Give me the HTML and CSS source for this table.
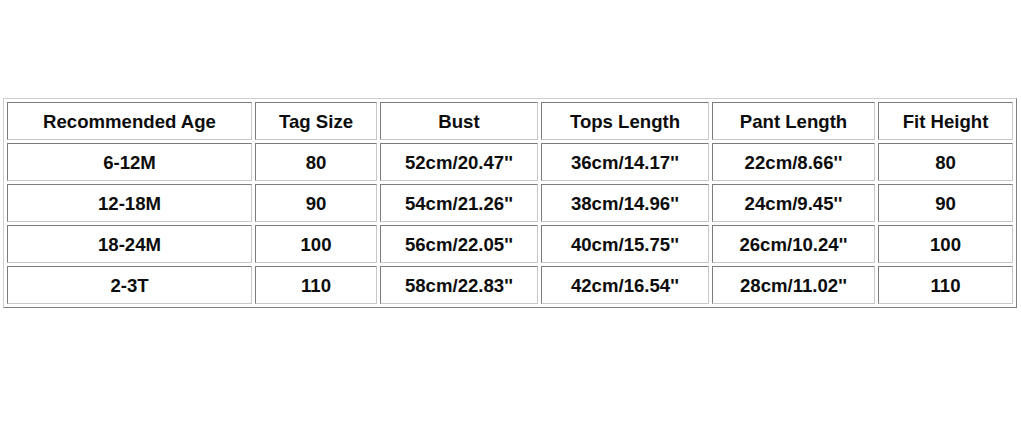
FILE: index.html
```html
<!DOCTYPE html>
<html>
<head>
<meta charset="utf-8">
<link rel="stylesheet" href="styles.css">
</head>
<body>
<div class="page">
<table class="size-table">
  <colgroup>
    <col class="c1"><col class="c2"><col class="c3"><col class="c4"><col class="c5"><col class="c6">
  </colgroup>
  <tr><td>Recommended Age</td><td>Tag Size</td><td>Bust</td><td>Tops Length</td><td>Pant Length</td><td>Fit Height</td></tr>
  <tr><td>6-12M</td><td>80</td><td>52cm/20.47''</td><td>36cm/14.17''</td><td>22cm/8.66''</td><td>80</td></tr>
  <tr><td>12-18M</td><td>90</td><td>54cm/21.26''</td><td>38cm/14.96''</td><td>24cm/9.45''</td><td>90</td></tr>
  <tr><td>18-24M</td><td>100</td><td>56cm/22.05''</td><td>40cm/15.75''</td><td>26cm/10.24''</td><td>100</td></tr>
  <tr><td>2-3T</td><td>110</td><td>58cm/22.83''</td><td>42cm/16.54''</td><td>28cm/11.02''</td><td>110</td></tr>
</table>
</div>
</body>
</html>
```
FILE: styles.css
```css
html, body {
  margin: 0;
  padding: 0;
  background: #fff;
}
.page {
  padding: 98px 0 0 3px;
}
.size-table {
  border-collapse: separate;
  border-spacing: 3px;
  border-style: solid;
  border-width: 1px;
  border-color: #cfcfcf #808080 #808080 #cfcfcf;
  table-layout: fixed;
  width: 1014px;
  font-family: "Liberation Sans", Arial, sans-serif;
  font-weight: bold;
  font-size: 18.6px;
  color: #0d0d0d;
}
.size-table td {
  box-sizing: border-box;
  height: 38px;
  padding: 2px 0 0 0;
  text-align: center;
  vertical-align: middle;
  border-style: solid;
  border-width: 1px;
  border-color: #7c7c7c #c8c8c8 #c8c8c8 #7c7c7c;
  white-space: nowrap;
}
.c1 { width: 245px; }
.c2 { width: 122px; }
.c3 { width: 158px; }
.c4 { width: 168px; }
.c5 { width: 163px; }
.c6 { width: 135px; }
```
